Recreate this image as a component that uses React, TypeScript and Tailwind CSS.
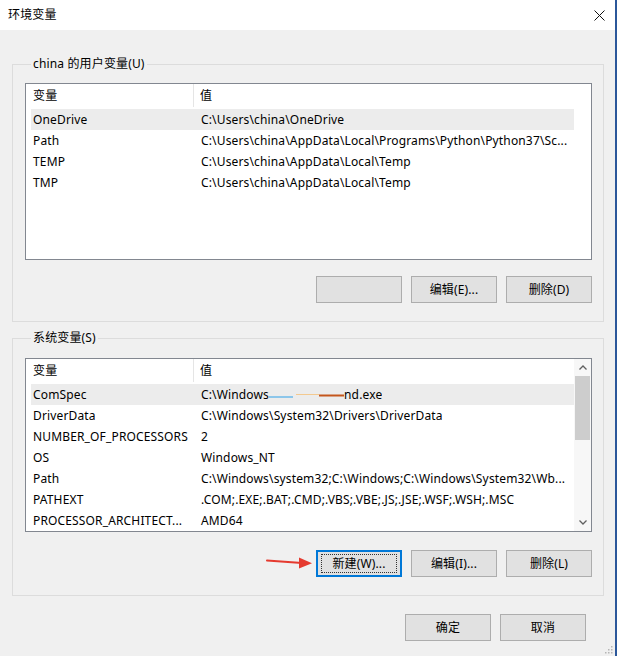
import React from "react";

const FONT = "font-['Noto_Sans','Noto_Sans_CJK_SC',sans-serif]";

type RowData = { name: string; value: React.ReactNode; selected?: boolean };

function Btn({ label, focused }: { label?: string; focused?: boolean }) {
  return (
    <div
      className={
        "w-[86px] h-[27px] flex items-center justify-center bg-[#e1e1e1] text-[12px] text-black " +
        (focused ? "border-2 border-[#0078d7]" : "border border-[#adadad]")
      }
    >
      {focused ? (
        <div className="w-[76px] h-[19px] flex items-center justify-center outline-1 outline-dotted outline-[#333] outline-offset-[-1px]">
          {label}
        </div>
      ) : (
        label
      )}
    </div>
  );
}

function Header() {
  return (
    <div className="h-[23px] flex items-center bg-white">
      <div className="w-[168px] h-full pl-[7px] flex items-center border-r border-[#e5e5e5]">变量</div>
      <div className="pl-[6px] flex items-center h-full">值</div>
    </div>
  );
}

function Row({ r }: { r: RowData }) {
  return (
    <div className={"h-[21px] ml-[5px] flex items-center whitespace-nowrap " + (r.selected ? "bg-[#ececec]" : "")}>
      <div className="w-[163px] pl-[2px] overflow-hidden">{r.name}</div>
      <div className="pl-[7px] overflow-hidden flex items-center">{r.value}</div>
    </div>
  );
}

function Chevron({ up }: { up?: boolean }) {
  return (
    <svg width="8" height="5" viewBox="0 0 8 5" className="block">
      <path
        d={up ? "M0.5 4.5 L4 1 L7.5 4.5" : "M0.5 0.5 L4 4 L7.5 0.5"}
        fill="none"
        stroke="#606060"
        strokeWidth="1.3"
      />
    </svg>
  );
}

function ListView({ rows, height, scroll }: { rows: RowData[]; height: string; scroll?: boolean }) {
  return (
    <div className={"w-[567px] border border-[#828790] bg-white flex " + height}>
      <div className="w-[548px] flex flex-col">
        <Header />
        <div className="h-[2px]" />
        {rows.map((r, i) => (
          <Row key={i} r={r} />
        ))}
      </div>
      {scroll ? (
        <div className="w-[17px] flex flex-col bg-[#f7f7f7]">
          <div className="h-[17px] flex items-center justify-center">
            <Chevron up />
          </div>
          <div className="h-[64px] mx-[1px] bg-[#cdcdcd]" />
          <div className="flex-1" />
          <div className="h-[17px] flex items-center justify-center">
            <Chevron />
          </div>
        </div>
      ) : null}
    </div>
  );
}

function Group({ title, children }: { title: string; children: React.ReactNode }) {
  return (
    <fieldset className="w-[592px] border border-[#dcdcdc] pl-[12px] pr-[11px] pb-[18px]">
      <legend className="ml-[6px] px-[2px] h-[16px] leading-[16px] text-[12px]">{title}</legend>
      {children}
    </fieldset>
  );
}

const userRows: RowData[] = [
  { name: "OneDrive", value: "C:\\Users\\china\\OneDrive", selected: true },
  { name: "Path", value: "C:\\Users\\china\\AppData\\Local\\Programs\\Python\\Python37\\Sc..." },
  { name: "TEMP", value: "C:\\Users\\china\\AppData\\Local\\Temp" },
  { name: "TMP", value: "C:\\Users\\china\\AppData\\Local\\Temp" },
];

const comspec = (
  <span className="flex items-center">
    <span>C:\Windows</span>
    <svg width="75" height="12" viewBox="0 0 75 12" className="block">
      <line x1="0" y1="8" x2="24" y2="8" stroke="#8cc6ea" strokeWidth="2" />
      <line x1="27" y1="5.5" x2="50" y2="5.5" stroke="#f3c98f" strokeWidth="1" />
      <line x1="50" y1="6.5" x2="75" y2="6.5" stroke="#c4561c" strokeWidth="2" />
    </svg>
    <span>nd.exe</span>
  </span>
);

const sysRows: RowData[] = [
  { name: "ComSpec", value: comspec, selected: true },
  { name: "DriverData", value: "C:\\Windows\\System32\\Drivers\\DriverData" },
  { name: "NUMBER_OF_PROCESSORS", value: "2" },
  { name: "OS", value: "Windows_NT" },
  { name: "Path", value: "C:\\Windows\\system32;C:\\Windows;C:\\Windows\\System32\\Wb..." },
  { name: "PATHEXT", value: ".COM;.EXE;.BAT;.CMD;.VBS;.VBE;.JS;.JSE;.WSF;.WSH;.MSC" },
  { name: "PROCESSOR_ARCHITECT...", value: "AMD64" },
];

export default function App() {
  return (
    <div className={"w-[617px] h-[656px] flex bg-[#f0f0f0] text-[12px] tracking-[0.15px] text-black overflow-hidden " + FONT}>
      <div className="w-[615px] h-full flex flex-col relative">
        <div className="h-[30px] bg-white flex items-center justify-between pl-[8px] pr-[10px]">
          <span className="text-[12px]">环境变量</span>
          <svg width="11" height="11" viewBox="0 0 11 11">
            <path d="M0.5 0.5 L10.5 10.5 M10.5 0.5 L0.5 10.5" stroke="#111" strokeWidth="1" />
          </svg>
        </div>

        <div className="ml-[12px] mt-[26px] flex flex-col">
          <Group title="china 的用户变量(U)">
            <div className="mt-[11px]">
              <ListView rows={userRows} height="h-[177px]" />
            </div>
            <div className="mt-[16px] flex justify-end gap-[9px]">
              <Btn />
              <Btn label="编辑(E)..." />
              <Btn label="删除(D)" />
            </div>
          </Group>

          <div className="mt-[8px]">
            <Group title="系统变量(S)">
              <div className="mt-[12px]">
                <ListView rows={sysRows} height="h-[174px]" scroll />
              </div>
              <div className="mt-[18px] flex justify-end gap-[9px]">
                <Btn label="新建(W)..." focused />
                <Btn label="编辑(I)..." />
                <Btn label="删除(L)" />
              </div>
            </Group>
          </div>
        </div>

        <div className="mt-[18px] flex justify-end gap-[9px] pr-[29px]">
          <Btn label="确定" />
          <Btn label="取消" />
        </div>

        <svg width="48" height="14" viewBox="0 0 48 14" className="absolute left-[266px] top-[556px]">
          <path d="M1 4.5 L36 7" stroke="#e53a2f" strokeWidth="2" strokeLinecap="round" />
          <path d="M33 1.5 L46 7.2 L33 12.5 Z" fill="#e53a2f" />
        </svg>

        <svg width="10" height="10" viewBox="0 0 10 10" className="absolute right-[1px] bottom-[1px]">
          <rect x="7" y="1" width="1.5" height="1.5" fill="#b5b5b5" />
          <rect x="4" y="4" width="1.5" height="1.5" fill="#b5b5b5" />
          <rect x="7" y="4" width="1.5" height="1.5" fill="#b5b5b5" />
          <rect x="1" y="7" width="1.5" height="1.5" fill="#b5b5b5" />
          <rect x="4" y="7" width="1.5" height="1.5" fill="#b5b5b5" />
          <rect x="7" y="7" width="1.5" height="1.5" fill="#b5b5b5" />
        </svg>
      </div>
      <div className="w-[2px] h-full bg-[#2b579a]" />
    </div>
  );
}
